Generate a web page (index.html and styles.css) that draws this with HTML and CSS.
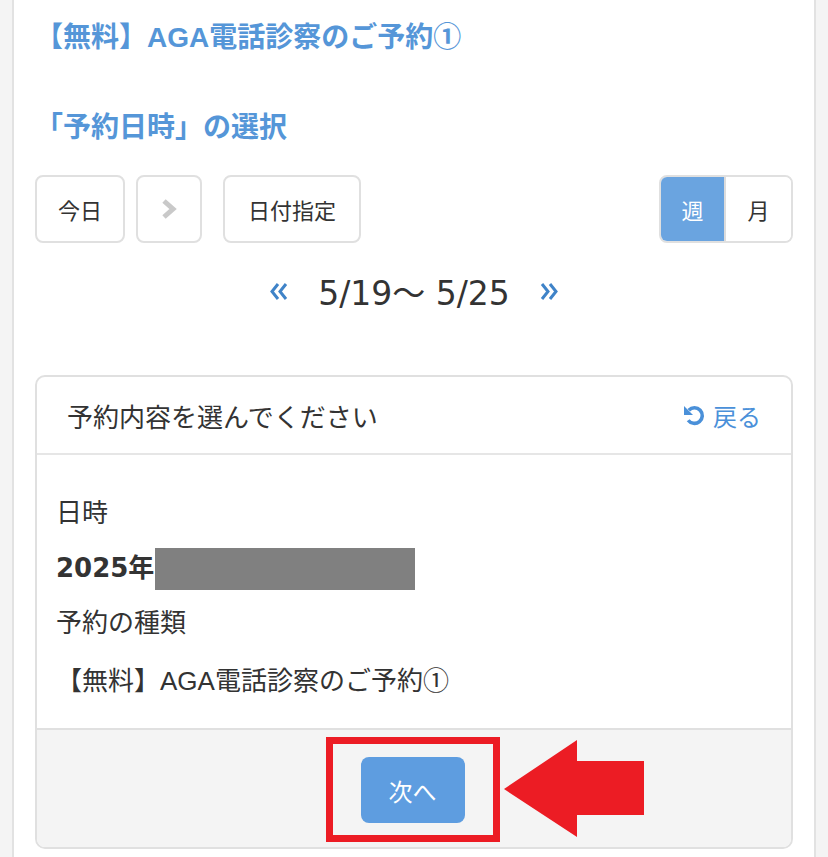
FILE: index.html
```html
<!DOCTYPE html>
<html lang="ja">
<head>
  <meta charset="UTF-8" />
  <meta name="viewport" content="width=device-width, initial-scale=1.0"/>
  <title>予約日時の選択</title>
  <link rel="stylesheet" href="styles.css">
</head>
<body>
  <div class="page">
    <h1 class="title">【無料】AGA電話診察のご予約①</h1>
    <h2 class="subtitle">「予約日時」の選択</h2>

    <div class="toolbar">
      <button type="button" class="btn">今日</button>
      <button type="button" class="btn btn-next" disabled>
        <svg width="16" height="22" viewBox="0 0 16 22"><polyline points="3,3 12,11 3,19" fill="none" stroke="#c9c9c9" stroke-width="5"/></svg>
      </button>
      <button type="button" class="btn btn-date">日付指定</button>
      <div class="view-toggle">
        <button type="button" class="toggle active">週</button>
        <button type="button" class="toggle">月</button>
      </div>
    </div>

    <div class="range">
      <a class="range-arrow" href="#">
        <svg width="18" height="19" viewBox="0 0 18 19"><polyline points="8,2 2,9.5 8,17" fill="none" stroke="#3f83c8" stroke-width="3"/><polyline points="16,2 10,9.5 16,17" fill="none" stroke="#3f83c8" stroke-width="3"/></svg>
      </a>
      <span class="range-text">5/19〜 5/25</span>
      <a class="range-arrow" href="#">
        <svg width="18" height="19" viewBox="0 0 18 19"><polyline points="2,2 8,9.5 2,17" fill="none" stroke="#3f83c8" stroke-width="3"/><polyline points="10,2 16,9.5 10,17" fill="none" stroke="#3f83c8" stroke-width="3"/></svg>
      </a>
    </div>

    <div class="card">
      <div class="card-header">
        <span>予約内容を選んでください</span>
        <a class="back" href="#">
          <svg width="22" height="22" viewBox="0 0 22 22"><path d="M5.8 6.2 A7.8 7.8 0 1 1 5.2 16.2" fill="none" stroke="#4a90d9" stroke-width="3.6"/><polygon points="1,2 1,11 10,11" fill="#4a90d9"/></svg>
          戻る
        </a>
      </div>
      <div class="card-body">
        <p>日時</p>
        <p class="date"><strong>2025年</strong><span class="masked"></span></p>
        <p>予約の種類</p>
        <p class="plan">【無料】AGA電話診察のご予約①</p>
      </div>
      <div class="card-footer">
        <button type="button" class="btn-primary">次へ</button>
        <div class="mark-box"></div>
        <svg class="mark-arrow" width="141" height="98" viewBox="0 0 141 98"><polygon points="0,49 73,0 73,21 140,21 140,75 73,75 73,97" fill="#ec1c24"/></svg>
      </div>
    </div>
  </div>
</body>
</html>
```

FILE: styles.css
```css
body {
  margin: 0;
  background: #f4f4f4;
  font-family: "Liberation Sans", "Noto Sans CJK JP", sans-serif;
  color: #333;
}
.page {
  margin: 0 12px;
  min-height: 100vh;
  box-sizing: border-box;
  padding: 0 21px 8px;
  background: white;
  border-left: 2px solid #e2e2e2;
  border-right: 2px solid #e2e2e2;
}
.title {
  margin: 0;
  padding-top: 18px;
  font-size: 28px;
  line-height: 40px;
  color: #5596d8;
  font-weight: bold;
}
.subtitle {
  margin: 52px 0 0;
  font-size: 28px;
  line-height: 36px;
  color: #5596d8;
  font-weight: bold;
}
.toolbar {
  margin-top: 29px;
  display: flex;
  align-items: center;
}
.btn {
  height: 68px;
  padding: 0 21px;
  font-family: inherit;
  font-size: 22px;
  color: #333;
  background: white;
  border: 2px solid #e0e0e0;
  border-radius: 8px;
}
.btn-next {
  width: 66px;
  margin-left: 11px;
  display: flex;
  align-items: center;
  justify-content: center;
  padding: 0;
}
.btn-date {
  margin-left: 21px;
  padding: 0 23px;
}
.view-toggle {
  margin-left: auto;
  display: flex;
  border: 2px solid #e0e0e0;
  border-radius: 8px;
  overflow: hidden;
}
.toggle {
  width: 65px;
  height: 64px;
  border: none;
  font-family: inherit;
  font-size: 22px;
  color: #333;
  background: white;
}
.toggle.active {
  background: #6aa4e0;
  color: white;
  border-right: 2px solid #dcdcdc;
}
.range {
  margin-top: 24px;
  height: 48px;
  display: flex;
  align-items: center;
  justify-content: center;
  gap: 30px;
}
.range-arrow {
  display: flex;
}
.range-text {
  font-family: "DejaVu Sans", "Noto Sans CJK JP", sans-serif;
  font-size: 33px;
  color: #333;
}
.card {
  margin-top: 60px;
  border: 2px solid #e0e0e0;
  border-radius: 10px;
  overflow: hidden;
}
.card-header {
  height: 76px;
  padding: 0 30px;
  display: flex;
  align-items: center;
  justify-content: space-between;
  border-bottom: 2px solid #e6e6e6;
  font-size: 26px;
}
.back {
  display: flex;
  align-items: center;
  gap: 8px;
  color: #4a90d9;
  text-decoration: none;
  font-size: 24px;
}
.card-body {
  padding: 31px 19px 19px;
}
.card-body p {
  margin: 0;
  font-size: 26px;
  line-height: 55px;
}
.date {
  display: flex;
  align-items: center;
}
.date strong {
  font-family: "DejaVu Sans", "Noto Sans CJK JP", sans-serif;
  font-size: 26px;
}
.masked {
  display: inline-block;
  width: 260px;
  height: 42px;
  margin-left: 1px;
  background: #808080;
}
.card-body .plan {
  margin-top: 3px;
}
.card-footer {
  position: relative;
  padding: 27px 0 24px;
  display: flex;
  justify-content: center;
  background: #f4f4f4;
  border-top: 2px solid #e0e0e0;
}
.btn-primary {
  width: 104px;
  height: 66px;
  margin-right: 3px;
  border: none;
  border-radius: 8px;
  background: #5e9de0;
  color: white;
  font-family: inherit;
  font-size: 24px;
}
.mark-box {
  position: absolute;
  left: 289px;
  top: 7px;
  width: 160px;
  height: 91px;
  border: 7px solid #ec1c24;
}
.mark-arrow {
  position: absolute;
  left: 467px;
  top: 10px;
}
```
